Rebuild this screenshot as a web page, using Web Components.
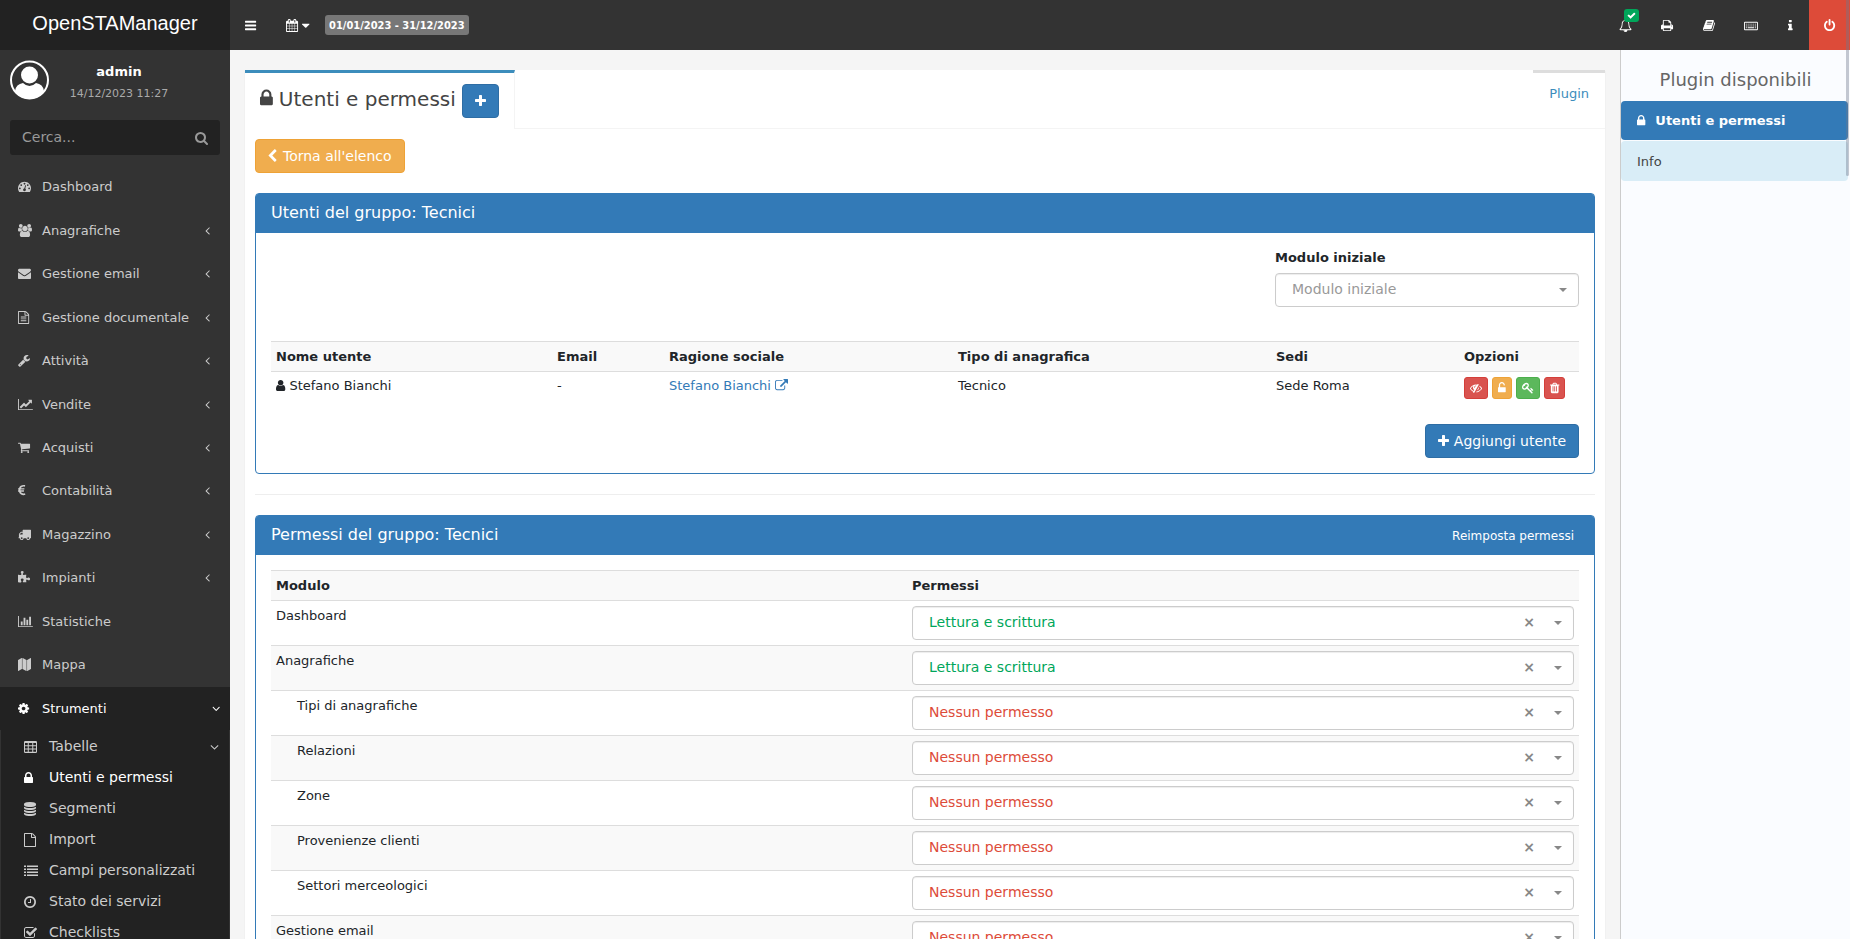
<!DOCTYPE html>
<html lang="it">
<head>
<meta charset="utf-8">
<title>Utenti e permessi - OpenSTAManager</title>
<style>
html,body{height:100%}
body{margin:0;font:13px/19px "DejaVu Sans",sans-serif;color:#212529;background:#f5f5f5;overflow:hidden}
</style>
</head>
<body>
<osm-app></osm-app>
<script>
// Icon table: name -> [viewBox x, advance width, path]; every glyph is 1792 units tall.
const R=(x,y,w,h)=>`M${x} ${y}h${w}v${h}h${-w}z`;
const FILE='M1596 380q28 28 48 76t20 88v1152q0 40-28 68t-68 28h-1344q-40 0-68-28t-28-68v-1600q0-40 28-68t68-28h896q40 0 88 20t76 48zm-444-244v376h376q-10-29-22-41l-313-313q-12-12-41-22zm384 1528v-1024h-416q-40 0-68-28t-28-68v-416h-768v1536h1280z';
const ICONS={
bars:[128,1536,'M1664 1344v128q0 26-19 45t-45 19h-1408q-26 0-45-19t-19-45v-128q0-26 19-45t45-19h1408q26 0 45 19t19 45zm0-512v128q0 26-19 45t-45 19h-1408q-26 0-45-19t-19-45v-128q0-26 19-45t45-19h1408q26 0 45 19t19 45zm0-512v128q0 26-19 45t-45 19h-1408q-26 0-45-19t-19-45v-128q0-26 19-45t45-19h1408q26 0 45 19t19 45z'],
plus:[192,1408,'M1600 736v192q0 40-28 68t-68 28h-416v416q0 40-28 68t-68 28h-192q-40 0-68-28t-28-68v-416h-416q-40 0-68-28t-28-68v-192q0-40 28-68t68-28h416v-416q0-40 28-68t68-28h192q40 0 68 28t28 68v416h416q40 0 68 28t28 68z'],
lock:[320,1152,'M640 768h512v-192q0-106-75-181t-181-75-181 75-75 181v192zm832 96v576q0 40-28 68t-68 28h-960q-40 0-68-28t-28-68v-576q0-40 28-68t68-28h32v-192q0-184 132-316t316-132 316 132 132 316v192h32q40 0 68 28t28 68z'],
unlock:[320,1152,'M1376 768q40 0 68 28t28 68v576q0 40-28 68t-68 28h-960q-40 0-68-28t-28-68v-576q0-40 28-68t68-28h32v-320q0-185 131.500-316.500t316.500-131.500 316.500 131.500 131.500 316.500q0 26-19 45t-45 19h-64q-26 0-45-19t-19-45q0-106-75-181t-181-75-181 75-75 181v320h736z'],
left:[346,1280,'M1427 301l-531 531 531 531q19 19 19 45t-19 45l-166 166q-19 19-45 19t-45-19l-742-742q-19-19-19-45t19-45l742-742q19-19 45-19t45 19l166 166q19 19 19 45t-19 45z'],
caret:[384,1024,'M1408 704q0 26-19 45l-448 448q-19 19-45 19t-45-19l-448-448q-19-19-19-45t19-45 45-19h896q26 0 45 19t19 45z'],
search:[64,1664,'M1216 832q0-185-131.500-316.500t-316.500-131.500-316.500 131.500-131.500 316.500 131.500 316.500 316.500 131.500 316.500-131.500 131.500-316.500zm512 832q0 52-38 90t-90 38q-54 0-90-38l-343-342q-179 124-399 124-143 0-273.500-55.500t-225-150-150-225-55.500-273.500 55.500-273.500 150-225 225-150 273.500-55.500 273.500 55.500 225 150 150 225 55.500 273.500q0 220-124 399l343 343q37 37 37 90z'],
dash:[0,1792,'M384 1152q0-53-37.500-90.500t-90.500-37.500-90.500 37.500-37.500 90.500 37.500 90.500 90.500 37.500 90.500-37.500 37.500-90.500zm192-448q0-53-37.500-90.500t-90.500-37.500-90.500 37.500-37.500 90.500 37.500 90.500 90.500 37.500 90.500-37.500 37.500-90.500zm428 481l101-382q6-26-7.500-48.500t-38.500-29.500-48 6.500-30 39.500l-101 382q-60 5-107 43.500t-63 98.500q-20 77 20 146t117 89 146-20 89-117q16-60-6-117t-72-91zm660-33q0-53-37.500-90.500t-90.500-37.500-90.500 37.500-37.500 90.500 37.500 90.500 90.500 37.500 90.500-37.500 37.500-90.500zm-640-640q0-53-37.500-90.500t-90.500-37.500-90.500 37.500-37.500 90.500 37.500 90.500 90.500 37.500 90.500-37.500 37.500-90.500zm448 192q0-53-37.500-90.500t-90.500-37.500-90.500 37.500-37.500 90.500 37.500 90.500 90.500 37.500 90.500-37.500 37.500-90.500zm320 448q0 261-141 483-19 29-54 29h-1402q-35 0-54-29-141-221-141-483 0-182 71-348t191-286 286-191 348-71 348 71 286 191 191 286 71 348z'],
users:[0,1920,'M593 896q-162 5-265 128h-134q-82 0-138-40.500t-56-118.500q0-353 124-353 6 0 43.500 21t97.500 42.500 119 21.500q67 0 133-23-5 37-5 66 0 159 93 292zm1071 637q0 120-73 189.500t-194 69.500h-874q-121 0-194-69.500t-73-189.500q0-53 3.500-103.500t14-109 26.500-108.500 43-97.500 62-81 85.500-53.500 111.500-20q10 0 43 21.500t73 48 107 48 135 21.500 135-21.500 107-48 73-48 43-21.500q61 0 111.500 20t85.500 53.500 62 81 43 97.500 26.500 108.500 14 109 3.500 103.500zm-1024-1277q0 106-75 181t-181 75-181-75-75-181 75-181 181-75 181 75 75 181zm704 384q0 159-112.500 271.500t-271.500 112.500-271.500-112.500-112.500-271.500 112.500-271.500 271.500-112.500 271.500 112.500 112.500 271.500zm576 225q0 78-56 118.500t-138 40.500h-134q-103-123-265-128 93-133 93-292 0-29-5-66 66 23 133 23 59 0 119-21.500t97.500-42.500 43.500-21q124 0 124 353zm-128-609q0 106-75 181t-181 75-181-75-75-181 75-181 181-75 181 75 75 181z'],
mail:[0,1792,'M1792 710v794q0 66-47 113t-113 47h-1472q-66 0-113-47t-47-113v-794q44 49 101 87 362 246 497 345 57 42 92.500 65.500t94.500 48 110 24.500h2q51 0 110-24.500t94.500-48 92.500-65.500q170-123 498-345 57-39 100-87zm0-294q0 79-49 151t-122 123q-376 261-468 325-10 7-42.500 31t-54 38.500-52 32.500-57.500 27-50 9h-2q-23 0-50-9t-57.500-27-52-32.500-54-38.500-42.500-31q-91-64-262-182.500t-205-142.500q-62-42-117-115.500t-55-136.500q0-78 41.500-130t118.500-52h1472q65 0 112.500 47t47.500 113z'],
doc:[128,1536,FILE+'m-1024-864q0-14 9-23t23-9h704q14 0 23 9t9 23v64q0 14-9 23t-23 9h-704q-14 0-23-9t-9-23v-64zm736 224q14 0 23 9t9 23v64q0 14-9 23t-23 9h-704q-14 0-23-9t-9-23v-64q0-14 9-23t23-9h704zm0 256q14 0 23 9t9 23v64q0 14-9 23t-23 9h-704q-14 0-23-9t-9-23v-64q0-14 9-23t23-9h704z'],
file:[128,1536,FILE],
wrench:[64,1664,'M448 1472q0-26-19-45t-45-19-45 19-19 45 19 45 45 19 45-19 19-45zm644-420l-682 682q-37 37-90 37-52 0-91-37l-106-108q-38-36-38-90 0-53 38-91l681-681q39 98 114.500 173.500t173.500 114.500zm634-435q0 39-23 106-47 134-164.500 217.500t-258.500 83.500q-185 0-316.500-131.500t-131.500-316.500 131.500-316.500 316.500-131.500q58 0 121.500 16.500t107.500 46.500q16 11 16 28t-16 28l-293 169v224l193 107q5-3 79-48.500t135.500-81 70.500-35.500q15 0 23.500 10t8.500 25z'],
line:[0,2048,'M2048 1536v128h-2048v-1536h128v1408h1920zm-128-1248v435q0 21-19.500 29.500t-35.500-7.500l-121-121-633 633q-10 10-23 10t-23-10l-233-233-416 416-192-192 585-585q10-10 23-10t23 10l233 233 464-464-121-121q-16-16-7.500-35.500t29.500-19.500h435q14 0 23 9t9 23z'],
cart:[64,1664,'M704 1536q0 52-38 90t-90 38-90-38-38-90 38-90 90-38 90 38 38 90zm896 0q0 52-38 90t-90 38-90-38-38-90 38-90 90-38 90 38 38 90zm128-1088v512q0 24-16.500 42.500t-40.500 21.500l-1044 122q13 60 13 70 0 16-24 64h920q26 0 45 19t19 45-19 45-45 19h-1024q-26 0-45-19t-19-45q0-11 8-31.500t16-36 21.500-40 15.500-29.500l-177-823h-204q-26 0-45-19t-19-45 19-45 45-19h256q16 0 28.500 6.500t19.500 15.500 13 24.500 8 26 5.500 29.500 4.500 26h1201q26 0 45 19t19 45z'],
euro:[384,1024,'M1360 1307l35 159q3 12-3 22.500t-17 14.500l-5 1q-4 2-10.500 3.500t-16 4.500-21.500 5.500-25.500 5-30 5-33.500 4.500-36.500 3-38.500 1q-234 0-409-130.500t-238-351.500h-95q-13 0-22.500-9.500t-9.500-22.500v-113q0-13 9.500-22.500t22.500-9.500h66q-2-57 1-105h-67q-14 0-23-9t-9-23v-114q0-14 9-23t23-9h98q67-210 243.500-338t400.500-128q102 0 194 23 11 3 20 15 6 11 3 24l-43 159q-3 13-14 19.500t-24 2.500l-4-1q-4-1-11.500-2.500l-17.500-3.500-22.500-3.500-26-3-29-2.500-29.500-1q-126 0-226 64t-150 176h468q16 0 25 12 10 12 7 26l-24 114q-5 26-32 26h-488q-3 37 0 105h459q15 0 25 12 9 12 6 27l-24 112q-2 11-11 18.500t-20 7.500h-387q48 117 149.500 185.500t228.500 68.500q18 0 36-1.500t33.500-3.500 29.500-4.500 24.500-5 18.500-4.500l12-3 5-2q13-5 26 2 12 7 15 21z'],
truck:[0,1792,'M640 1408q0-52-38-90t-90-38-90 38-38 90 38 90 90 38 90-38 38-90zm-384-512h384v-256h-158q-13 0-22 9l-195 195q-9 9-9 22v30zm1280 512q0-52-38-90t-90-38-90 38-38 90 38 90 90 38 90-38 38-90zm256-1088v1024q0 15-4 26.500t-13.500 18.500-16.500 11.500-23.500 6-22.500 2-25.500 0-22.500-.5q0 106-75 181t-181 75-181-75-75-181h-384q0 106-75 181t-181 75-181-75-75-181h-64q-3 0-22.500.5t-25.500 0-22.500-2-23.500-6-16.500-11.500-13.500-18.500-4-26.500q0-26 19-45t45-19v-320q0-8-.5-35t0-38 2.500-34.500 6.500-37 14-30.500 22.500-30l198-198q19-19 50.500-32t58.500-13h160v-192q0-26 19-45t45-19h1024q26 0 45 19t19 45z'],
puzzle:[64,1664,'M1728 1098q0 81-44.500 135t-123.500 54q-41 0-77.500-17.500t-59-38-56.500-38-71-17.500q-110 0-110 124 0 39 16 115t15 115v5q-22 0-33 1-34 3-97.500 11.500t-115.500 13.500-98 5q-61 0-103-26.500t-42-83.500q0-37 17.500-71t38-56.500 38-59 17.500-77.500q0-79-54-123.500t-135-44.500q-84 0-143 45.500t-59 127.500q0 43 15 83t33.500 64.500 33.500 53 15 50.500q0 45-46 89-37 35-117 35-95 0-245-24-9-2-27.500-4t-27.500-4l-13-2q-1 0-3-1-2 0-2-1v-1024q2 1 17.500 3.500t34 5 21.500 3.500q150 24 245 24 80 0 117-35 46-44 46-89 0-22-15-50.500t-33.500-53-33.500-64.500-15-83q0-82 59-127.500t144-45.500q80 0 134 44.500t54 123.500q0 41-17.500 77.500t-38 59-38 56.500-17.500 71q0 57 42 83.500t103 26.500q64 0 180-15t163-17v2q-1 2-3.500 17.500t-5 34-3.500 21.500q-24 150-24 245 0 80 35 117 44 46 89 46 22 0 50.500-15t53-33.500 64.500-33.500 83-15q82 0 127.500 59t45.500 143z'],
chart:[0,2048,R(0,128,128,1536)+R(128,1536,1920,128)+R(384,896,256,512)+R(768,384,256,1024)+R(1152,640,256,768)+R(1536,256,256,1152)],
map:[0,1792,'M512 0q13 0 22.500 9.500t9.500 22.500v1472q0 20-17 28l-480 256q-7 4-15 4-13 0-22.500-9.500t-9.500-22.500v-1472q0-20 17-28l480-256q7-4 15-4zm1248 0q13 0 22.500 9.500t9.500 22.500v1472q0 20-17 28l-480 256q-7 4-15 4-13 0-22.500-9.500t-9.500-22.500v-1472q0-20 17-28l480-256q7-4 15-4zm-1120 0q8 0 14 3l512 256q18 10 18 29v1472q0 13-9.500 22.500t-22.500 9.500q-8 0-14-3l-512-256q-18-10-18-29v-1472q0-13 9.500-22.500t22.500-9.500z'],
cog:[128,1536,'M1152 896q0-106-75-181t-181-75-181 75-75 181 75 181 181 75 181-75 75-181zm512-109v222q0 12-8 23t-20 13l-185 28q-19 54-39 91 35 50 107 138 10 12 10 25t-9 23q-27 37-99 108t-94 71q-12 0-26-9l-138-108q-44 23-91 38-16 136-29 186-7 28-36 28h-222q-14 0-24.500-8.500t-11.500-21.500l-28-184q-49-16-90-37l-141 107q-10 9-25 9-14 0-25-11-126-114-165-168-7-10-7-23 0-12 8-23 15-21 51-66.500t54-70.500q-27-50-41-99l-183-27q-13-2-21-12.500t-8-23.500v-222q0-12 8-23t19-13l186-28q14-46 39-92-40-57-107-138-10-12-10-24 0-10 9-23 26-36 98.500-107.500t94.500-71.500q13 0 26 10l138 107q44-23 91-38 16-136 29-186 7-28 36-28h222q14 0 24.500 8.500t11.500 21.500l28 184q49 16 90 37l142-107q9-9 24-9 13 0 25 10 129 119 165 170 7 8 7 22 0 12-8 23-15 21-51 66.500t-54 70.500q26 50 41 98l183 28q13 2 21 12.500t8 23.500z'],
table:[64,1664,'M224 128h1344q160 0 160 160v1216q0 160-160 160h-1344q-160 0-160-160v-1216q0-160 160-160z'+[[192,352],[672,448],[1248,352]].map(([x,w])=>[384,800,1216].map(y=>R(x,y,w,288)).join('')).join('')],
db:[128,1536,'M896 768q237 0 443-43t325-127v170q0 69-103 128t-280 93.500-385 34.500-385-34.500-280-93.500-103-128v-170q119 84 325 127t443 43zm0 768q237 0 443-43t325-127v170q0 69-103 128t-280 93.500-385 34.500-385-34.500-280-93.500-103-128v-170q119 84 325 127t443 43zm0-384q237 0 443-43t325-127v170q0 69-103 128t-280 93.500-385 34.500-385-34.500-280-93.500-103-128v-170q119 84 325 127t443 43zm0-1152q208 0 385 34.500t280 93.500 103 128v128q0 69-103 128t-280 93.500-385 34.500-385-34.500-280-93.500-103-128v-128q0-69 103-128t280-93.500 385-34.500z'],
list:[0,1792,[128,512,896,1280].map(y=>R(0,y+64,256,192)+R(384,y+64,1408,192)).join('')],
clock:[128,1536,'M1024 544v448q0 14-9 23t-23 9h-320q-14 0-23-9t-9-23v-64q0-14 9-23t23-9h224v-352q0-14 9-23t23-9h64q14 0 23 9t9 23zm416 352q0-148-73-273t-198-198-273-73-273 73-198 198-73 273 73 273 198 198 273 73 273-73 198-198 73-273zm224 0q0 209-103 385.500t-279.500 279.500-385.500 103-385.500-103-279.500-279.500-103-385.500 103-385.500 279.500-279.500 385.500-103 385.500 103 279.500 279.500 103 385.500z'],
checkbox:[64,1664,'M1472 930v318q0 119-84.500 203.500t-203.500 84.500h-832q-119 0-203.500-84.500t-84.500-203.500v-832q0-119 84.500-203.500t203.500-84.500h832q63 0 117 25 15 7 18 23 3 17-9 29l-49 49q-10 10-23 10-3 0-9-2-23-6-45-6h-832q-66 0-113 47t-47 113v832q0 66 47 113t113 47h832q66 0 113-47t47-113v-254q0-13 9-22l64-64q10-10 23-10 6 0 12 3 20 8 20 29zm231-489l-814 814q-24 24-57 24t-57-24l-430-430q-24-24-24-57t24-57l110-110q24-24 57-24t57 24l263 263 647-647q24-24 57-24t57 24l110 110q24 24 24 57t-24 57z'],
aleft:[544,704,'M1203 544q0 13-10 23l-393 393 393 393q10 10 10 23t-10 23l-50 50q-10 10-23 10t-23-10l-466-466q-10-10-10-23t10-23l466-466q10-10 23-10t23 10l50 50q10 10 10 23z'],
adown:[320,1152,'M1395 736q0 13-10 23l-466 466q-10 10-23 10t-23-10l-466-466q-10-10-10-23t10-23l50-50q10-10 23-10t23 10l393 393 393-393q10-10 23-10t23 10l50 50q10 10 10 23z'],
user:[256,1280,'M1536 1399q0 109-62.500 187t-150.500 78h-854q-88 0-150.500-78t-62.500-187q0-85 8.500-160.500t31.500-152 58.500-131 94-89 134.500-34.500q131 128 313 128t313-128q76 0 134.500 34.500t94 89 58.500 131 31.500 152 8.500 160.500zm-256-887q0 159-112.500 271.500t-271.500 112.500-271.500-112.500-112.500-271.500 112.500-271.500 271.500-112.500 271.500 112.500 112.500 271.500z'],
ext:[0,1792,'M1408 928v320q0 119-84.500 203.500t-203.500 84.500h-832q-119 0-203.500-84.500t-84.500-203.500v-832q0-119 84.500-203.500t203.500-84.500h704q14 0 23 9t9 23v64q0 14-9 23t-23 9h-704q-66 0-113 47t-47 113v832q0 66 47 113t113 47h832q66 0 113-47t47-113v-320q0-14 9-23t23-9h64q14 0 23 9t9 23zm384-864v512q0 26-19 45t-45 19-45-19l-176-176-652 652q-10 10-23 10t-23-10l-114-114q-10-10-10-23t10-23l652-652-176-176q-19-19-19-45t19-45 45-19h512q26 0 45 19t19 45z'],
eye:[0,1792,'M555 1335l78-141q-87-63-136-159t-49-203q0-121 61-225-229 117-381 353 167 258 427 375zm389-759q0-20-14-34t-34-14q-125 0-214.500 89.500t-89.500 214.500q0 20 14 34t34 14 34-14 14-34q0-86 61-147t147-61q20 0 34-14t14-34zm363-191q0 7-1 9-106 189-316 567t-315 566l-49 89q-10 16-28 16-12 0-134-70-16-10-16-28 0-12 44-87-143-65-263.500-173t-208.500-245q-20-31-20-69t20-69q153-235 380-371t496-136q89 0 180 17l54-97q10-16 28-16 5 0 18 6t31 15.500 33 18.500 31.500 18.500 19.500 11.500q16 10 16 27zm37 447q0 139-79 253.500t-209 164.500l280-502q8 45 8 84zm448 128q0 35-20 69-39 64-109 145-150 172-347.500 267t-419.500 95l74-132q212-18 392.500-137t301.500-307q-115-179-282-294l63-112q95 64 182.500 153t144.500 184q20 34 20 69z'],
key:[0,1792,'M832 512q0-80-56-136t-136-56-136 56-56 136q0 42 19 83-41-19-83-19-80 0-136 56t-56 136 56 136 136 56 136-56 56-136q0-42-19-83 41 19 83 19 80 0 136-56t56-136zm851 704q0 17-49 66t-66 49q-9 0-28.500-16t-36.500-33-38.500-40-24.500-26l-96 96 220 220q28 28 28 68 0 42-39 81t-81 39q-40 0-68-28l-671-671q-176 131-365 131-163 0-265.500-102.500t-102.500-265.500q0-160 95-313t248-248 313-95q163 0 265.500 102.500t102.500 265.500q0 189-131 365l355 355 96-96q-3-3-26-24.500t-40-38.500-33-36.500-16-28.500q0-17 49-66t66-49q13 0 23 10 6 6 46 44.500t82 79.500 86.500 86 73 78 28.500 41z'],
trash:[192,1408,'M704 1376v-704q0-14-9-23t-23-9h-64q-14 0-23 9t-9 23v704q0 14 9 23t23 9h64q14 0 23-9t9-23zm256 0v-704q0-14-9-23t-23-9h-64q-14 0-23 9t-9 23v704q0 14 9 23t23 9h64q14 0 23-9t9-23zm256 0v-704q0-14-9-23t-23-9h-64q-14 0-23 9t-9 23v704q0 14 9 23t23 9h64q14 0 23-9t9-23zm-544-992h448l-48-117q-7-9-17-11h-317q-10 2-17 11zm928 32v64q0 14-9 23t-23 9h-96v948q0 83-47 143.500t-113 60.500h-832q-66 0-113-58.500t-47-141.500v-952h-96q-14 0-23-9t-9-23v-64q0-14 9-23t23-9h309l70-167q15-37 54-63t79-26h320q40 0 79 26t54 63l70 167h309q14 0 23 9t9 23z'],
cal:[64,1664,'M192 1664h288v-288h-288v288zm352 0h320v-288h-320v288zm-352-352h288v-320h-288v320zm352 0h320v-320h-320v320zm-352-384h288v-288h-288v288zm736 736h320v-288h-320v288zm-384-736h320v-288h-320v288zm768 736h288v-288h-288v288zm-384-352h320v-320h-320v320zm-352-864v-288q0-13-9.500-22.500t-22.500-9.500h-64q-13 0-22.500 9.500t-9.500 22.500v288q0 13 9.500 22.500t22.500 9.500h64q13 0 22.500-9.500t9.500-22.500zm736 864h288v-320h-288v320zm-384-384h320v-288h-320v288zm384 0h288v-288h-288v288zm32-480v-288q0-13-9.500-22.500t-22.500-9.500h-64q-13 0-22.500 9.500t-9.500 22.500v288q0 13 9.500 22.500t22.500 9.500h64q13 0 22.500-9.500t9.500-22.500zm384-64v1280q0 52-38 90t-90 38h-1408q-52 0-90-38t-38-90v-1280q0-52 38-90t90-38h128v-96q0-66 47-113t113-47h64q66 0 113 47t47 113v96h384v-96q0-66 47-113t113-47h64q66 0 113 47t47 113v96h128q52 0 90 38t38 90z'],
bell:[0,1792,'M912 1696q0-16-16-16-59 0-101.500-42.500t-42.500-101.500q0-16-16-16t-16 16q0 73 51.500 124.500t124.500 51.500q16 0 16-16zm-666-288h1300q-266-300-266-832 0-51-24-105t-69-103-121.500-80.500-169.500-31.500-169.500 31.500-121.500 80.500-69 103-24 105q0 532-266 832zm1482 0q0 52-38 90t-90 38h-448q0 106-75 181t-181 75-181-75-75-181h-448q-52 0-90-38t-38-90q50-42 91-88t85-119.500 74.500-158.500 50-206 19.500-260q0-152 117-282.500t307-158.500q-8-19-8-39 0-40 28-68t68-28 68 28 28 68q0 20-8 39 190 28 307 158.500t117 282.500q0 139 19.500 260t50 206 74.500 158.500 85 119.500 91 88z'],
check:[0,1792,'M1671 566q0 40-28 68l-724 724-136 136q-28 28-68 28t-68-28l-136-136-362-362q-28-28-28-68t28-68l136-136q28-28 68-28t68 28l294 295 656-657q28-28 68-28t68 28l136 136q28 28 28 68z'],
print:[64,1664,'M448 1536h896v-256h-896v256zm0-640h896v-384h-160q-40 0-68-28t-28-68v-160h-640v640zm1152 64q0-26-19-45t-45-19-45 19-19 45 19 45 45 19 45-19 19-45zm128 0v416q0 13-9.500 22.500t-22.500 9.500h-224v160q0 40-28 68t-68 28h-960q-40 0-68-28t-28-68v-160h-224q-13 0-22.500-9.500t-9.500-22.500v-416q0-79 56.500-135.500t135.500-56.500h64v-544q0-40 28-68t68-28h672q40 0 88 20t76 48l152 152q28 28 48 76t20 88v256h64q79 0 135.500 56.500t56.500 135.500z'],
book:[64,1664,'M1703 478q40 57 18 129l-275 906q-19 64-76.500 107.500t-122.500 43.500h-923q-77 0-148.500-53.500t-99.500-131.500q-24-67-2-127 0-4 3-27t4-37q1-8-3-21.500t-3-19.500q2-11 8-21t16.500-23.500 16.500-23.500q23-38 45-91.500t30-91.500q3-10 .5-30t-.5-28q3-11 17-28t17-23q21-36 42-92t25-90q1-9-2.500-32t.5-28q4-13 22-30.500t22-22.500q19-26 42.500-84.500t27.500-96.500q1-8-3-25.500t-2-26.500q2-8 9-18t18-23 17-21q8-12 16.500-30.500t15-35 16-36 19.500-32 26.500-23.500 36-11.500 47.500 5.500l-1 3q38-9 51-9h761q74 0 114 56t18 130l-274 906q-36 119-71.500 153.500t-128.500 34.500h-869q-27 0-38 15-11 16-1 43 24 70 144 70h923q29 0 56-15.500t35-41.500l300-987q7-22 5-57 38 15 59 43zm-1064 2q-4 13 2 22.500t20 9.500h608q13 0 25.500-9.500t16.500-22.500l21-64q4-13-2-22.500t-20-9.500h-608q-13 0-25.500 9.500t-16.500 22.500zm-83 256q-4 13 2 22.500t20 9.500h608q13 0 25.500-9.500t16.500-22.500l21-64q4-13-2-22.500t-20-9.500h-608q-13 0-25.500 9.500t-16.500 22.500z'],
keyboard:[0,1920,'M128 384h1664q128 0 128 128v896q0 128-128 128h-1664q-128 0-128-128v-896q0-128 128-128zM128 512v896h1664v-896z'+[256,512,768,1024,1280,1536].map(x=>R(x,640,128,128)+R(x,896,128,128)).join('')+R(256,1152,128,128)+R(512,1152,896,128)+R(1536,1152,128,128)],
info:[576,640,'M1216 1344v128q0 26-19 45t-45 19h-512q-26 0-45-19t-19-45v-128q0-26 19-45t45-19h64v-384h-64q-26 0-45-19t-19-45v-128q0-26 19-45t45-19h384q26 0 45 19t19 45v576h64q26 0 45 19t19 45zm-128-1152v192q0 26-19 45t-45 19h-256q-26 0-45-19t-19-45v-192q0-26 19-45t45-19h256q26 0 45 19t19 45z'],
power:[128,1536,'M1664 896q0 156-61 298t-164 245-245 164-298 61-298-61-245-164-164-245-61-298q0-182 80.500-343t226.500-270q43-32 95.500-25t83.500 50q32 42 24.500 94.500t-49.500 84.500q-98 74-151.500 181t-53.500 228q0 104 40.500 198.500t109.500 163.500 163.500 109.500 198.500 40.500 198.500-40.500 163.500-109.500 109.500-163.500 40.500-198.500q0-121-53.500-228t-151.500-181q-42-32-49.500-84.500t24.500-94.500q31-43 84-50t95 25q146 109 226.500 270t80.500 343zm-640-768v640q0 52-38 90t-90 38-90-38-38-90v-640q0-52 38-90t90-38 90 38 38 90z']
};
const define=(name,html,setup)=>customElements.define(name,class extends HTMLElement{
  constructor(){
    super();
    const t=document.createElement('template');
    t.innerHTML=typeof html==='function'?html(this):html;
    this.attachShadow({mode:'open'}).append(t.content.cloneNode(true));
    if(setup)setup(this);
  }
});
const RESET='<style>*{box-sizing:border-box}a{color:inherit;text-decoration:none}ul{list-style:none;margin:0;padding:0}button,input,select{font:inherit;margin:0}</style>';

customElements.define('osm-icon',class extends HTMLElement{
  connectedCallback(){
    if(this.shadowRoot)return;
    const [x,w,d]=ICONS[this.getAttribute('name')];
    this.attachShadow({mode:'open'}).innerHTML=`<style>:host{display:inline-block;line-height:1;height:1em;vertical-align:-2px}svg{display:block;height:1em;fill:currentColor;overflow:visible}</style><svg viewBox="${x} 0 ${w} 1792" aria-hidden="true"><path fill-rule="${this.getAttribute('name')==='map'?'nonzero':'evenodd'}" d="${d}"/></svg>`;
  }
});

const ic=n=>`<osm-icon name="${n}"></osm-icon>`;

define('osm-topbar',RESET+`<style>
:host{display:flex;height:50px;background:#333;color:#fff}
.brand{flex:0 0 230px;background:#222;text-align:center;font:20px/46px "Liberation Sans",Arial,sans-serif;color:#fff}
button{background:none;border:0;color:inherit;padding:0;height:50px;display:flex;align-items:center;justify-content:center;gap:4px;position:relative}
.left{display:flex;align-items:center;flex:1}
.menu{width:41px}.cal{width:54px}
.range{background:#777;border-radius:3px;height:20px;padding:0 4px;font-weight:bold;line-height:21px;font-family:"DejaVu Sans Condensed","DejaVu Sans",sans-serif;font-size:11px}
.right{display:flex;padding-top:1px}
.right button{width:42px;height:49px}
.right .info{width:37px}
.right .power{width:41px;background:#dd4b39;height:50px;margin-top:-1px}
.ok{position:absolute;left:20px;top:8px;width:15px;height:13px;border-radius:3px;background:#00a65a;font-size:9px;display:flex;align-items:center;justify-content:center}
</style>
<a class="brand" href="#">OpenSTAManager</a>
<div class="left"><button class="menu" aria-label="Menu">${ic('bars')}</button><button class="cal" aria-label="Periodo">${ic('cal')}${ic('caret')}</button><a href="#" class="range">01/01/2023 - 31/12/2023</a></div>
<div class="right"><button aria-label="Notifiche">${ic('bell')}<span class="ok">${ic('check')}</span></button><button aria-label="Stampa">${ic('print')}</button><button aria-label="Manuale">${ic('book')}</button><button aria-label="Scorciatoie">${ic('keyboard')}</button><button class="info" aria-label="Informazioni">${ic('info')}</button><button class="power" aria-label="Esci">${ic('power')}</button></div>`);

define('osm-nav-item',RESET+`<style>
:host{display:block}
a{display:flex;align-items:center;height:100%;padding:0 20px 0 18px;color:#ccc}
.i{flex:0 0 24px;display:flex}
.t{flex:1}
:host([open]) a{background:#222;color:#fff;padding-right:10px}
:host([sub]) a{padding:0 10px 0 23px;height:31px;font-size:14px;background:none;color:#ccc}
:host([sub]) .i{flex-basis:25px}
:host([sub][active]) a{color:#fff}
</style><a href="#"><span class="i"><slot name="icon"></slot></span><span class="t"><slot></slot></span><slot name="arrow"></slot></a>`);

const item=(n,t,arrow='',attr='')=>`<osm-nav-item ${attr}><osm-icon slot="icon" name="${n}"></osm-icon>${t}${arrow?`<osm-icon slot="arrow" name="${arrow}"></osm-icon>`:''}</osm-nav-item>`;
define('osm-sidebar',RESET+`<style>
:host{display:block;background:#333;color:#ccc;overflow:hidden}
.user{display:flex;height:70px;padding:10px}
.user>svg{width:39px;height:40px;flex:none}
.user div{flex:0 0 140px;text-align:center;color:#aaa;font-size:11px;line-height:20px;padding-top:1px}
.user b{display:block;color:#fff;font-size:13px;line-height:22px;margin-bottom:1px}
form{margin:0 10px;height:35px;background:#222;border-radius:3px;display:flex;align-items:center;padding-right:12px;color:#999;font-size:14px}
input{flex:1;min-width:0;background:none;border:0;padding:0 12px;font-size:14px;color:#ccc}
input::placeholder{color:#999;opacity:1}
form button{background:none;border:0;padding:0;color:#999;display:flex}
.main{display:grid;grid-template-rows:repeat(13,1fr);min-height:565px;margin-top:10px}
.sub{background:#222;margin:0 1px;padding-top:1px}
</style>
<div class="user"><svg viewBox="0 0 39 40"><circle cx="19.5" cy="20" r="18.500" fill="#333" stroke="#fff" stroke-width="2"/><circle cx="19.500" cy="15" r="8.500" fill="#fff"/><path fill="#fff" d="M5 31q1-7 8-8 3 3 6.500 3t6.500-3q7 1 8 8-5 8-14.500 8t-14.500-8z"/></svg><div><b>admin</b>14/12/2023 11:27</div></div>
<form><input type="text" placeholder="Cerca..." aria-label="Cerca"><button type="button" aria-label="Avvia ricerca">${ic('search')}</button></form>
<nav><div class="main">${[['dash','Dashboard'],['users','Anagrafiche',1],['mail','Gestione email',1],['doc','Gestione documentale',1],['wrench','Attività',1],['line','Vendite',1],['cart','Acquisti',1],['euro','Contabilità',1],['truck','Magazzino',1],['puzzle','Impianti',1],['chart','Statistiche'],['map','Mappa']].map(([n,t,a])=>item(n,t,a?'aleft':'')).join('')}${item('cog','Strumenti','adown','open')}</div>
<div class="sub">${item('table','Tabelle','adown','sub')}${item('lock','Utenti e permessi','','sub active')}${item('db','Segmenti','','sub')}${item('file','Import','','sub')}${item('list','Campi personalizzati','','sub')}${item('clock','Stato dei servizi','','sub')}${item('checkbox','Checklists','','sub')}</div></nav>`);

define('osm-button',RESET+`<style>
:host{display:inline-block}
button{display:flex;align-items:center;justify-content:center;gap:5px;height:34px;padding:0 12px 1px;border:1px solid #2e6da4;border-radius:4px;background:#337ab7;color:#fff;font-size:14px;line-height:20px}
:host([kind=warning]) button{background:#f0ad4e;border-color:#eea236}
:host([kind=danger]) button{background:#d9534f;border-color:#d43f3a}
:host([kind=success]) button{background:#5cb85c;border-color:#4cae4c}
:host([small]) button{height:22px;padding:0 5px;border-radius:3px;font-size:12px}
</style><button><slot></slot></button>`,el=>{if(el.title)el.shadowRoot.querySelector('button').setAttribute('aria-label',el.title)});

define('osm-select',el=>RESET+`<style>
:host{display:block;font-size:14px}
label{display:block;font-weight:bold;font-size:13px;margin-bottom:6px}
.box{position:relative}
select{display:block;appearance:none;width:100%;height:34px;border:1px solid #ccc;border-radius:4px;background:#fff;padding:0 60px 2px 16px;line-height:20px;color:#999;box-shadow:inset 0 1px 1px rgba(0,0,0,.075)}
select.rw{color:#00a65a}select.no{color:#dd4b39}
.x{position:absolute;right:38px;top:6px;width:14px;height:20px;padding:0;border:0;background:none;color:#888;font-weight:bold;line-height:20px}
.c{position:absolute;right:12px;top:15px;border:solid transparent;border-width:4px 4px 0;border-top-color:#888;pointer-events:none}
</style>${el.hasAttribute('label')?`<label for="s">${el.getAttribute('label')}</label>`:''}<div class="box"><select id="s" ${el.hasAttribute('label')?'':`aria-label="Permessi ${el.getAttribute('for-module')}"`} class="${el.getAttribute('tone')||''}"><option>${el.getAttribute('value')}</option></select>${el.hasAttribute('tone')?'<button class="x" aria-label="Rimuovi">×</button>':''}<span class="c"></span></div>`);

define('osm-panel',RESET+`<style>
:host{display:block;border:1px solid #337ab7;border-radius:4px;background:#fff}
header{display:flex;justify-content:space-between;align-items:center;height:39px;padding:0 20px 2px 15px;background:#337ab7;color:#fff;border-radius:2px 2px 0 0}
h2{margin:0;font-size:16px;font-weight:normal;line-height:20px}
.body{padding:15px}
</style><header><h2><slot name="title"></slot></h2><slot name="action"></slot></header><div class="body"><slot></slot></div>`);

const TABLE=`<style>
table{width:100%;table-layout:fixed;border-collapse:separate;border-spacing:0}
th,td{padding:5px;border-top:1px solid #ddd;text-align:left;vertical-align:top;line-height:19px;color:#212529}
th{background:#f9f9f9}
</style>`;
define('osm-users',RESET+TABLE+`<style>
:host{display:block}
td{line-height:18px}
.ops{display:flex;gap:4px}
td a{color:#337ab7}
</style><table><colgroup><col style="width:281px"><col style="width:112px"><col style="width:289px"><col style="width:318px"><col style="width:188px"><col style="width:120px"></colgroup>
<thead><tr><th>Nome utente</th><th>Email</th><th>Ragione sociale</th><th>Tipo di anagrafica</th><th>Sedi</th><th>Opzioni</th></tr></thead>
<tbody><tr><td>${ic('user')} Stefano Bianchi</td><td>-</td><td><a href="#">Stefano Bianchi ${ic('ext')}</a></td><td>Tecnico</td><td>Sede Roma</td><td><div class="ops"><osm-button small kind="danger" title="Disabilita">${ic('eye')}</osm-button><osm-button small kind="warning" title="Sblocca">${ic('unlock')}</osm-button><osm-button small kind="success" title="Token">${ic('key')}</osm-button><osm-button small kind="danger" title="Elimina">${ic('trash')}</osm-button></div></td></tr></tbody></table>`);

const PERMS=[['Dashboard',0,1],['Anagrafiche',0,1],['Tipi di anagrafiche',1],['Relazioni',1],['Zone',1],['Provenienze clienti',1],['Settori merceologici',1],['Gestione email',0]];
define('osm-permissions',RESET+TABLE+`<style>
:host{display:block}
tbody tr:nth-child(even){background:#f9f9f9}
.child{padding-left:26px}
</style><table><colgroup><col style="width:636px"><col style="width:672px"></colgroup><thead><tr><th>Modulo</th><th>Permessi</th></tr></thead><tbody>${PERMS.map(([n,c,rw])=>`<tr><td class="${c?'child':''}">${n}</td><td><osm-select for-module="${n}" tone="${rw?'rw':'no'}" value="${rw?'Lettura e scrittura':'Nessun permesso'}"></osm-select></td></tr>`).join('')}</tbody></table>`);

define('osm-content',RESET+`<style>
:host{display:block;padding:20px 15px 0;overflow:hidden}
.card{background:#fff;box-shadow:0 1px 1px rgba(0,0,0,.1)}
.tabs{display:flex;justify-content:space-between;height:59px;border-bottom:1px solid #f4f4f4}
.tab{display:flex;align-items:flex-start;height:59px;border-top:3px solid #3c8dbc;background:#fff;border-right:1px solid #f4f4f4;padding:11px 15px 0;color:#444}
h1{display:flex;align-items:flex-start;gap:6px;margin:0;font-size:20px;line-height:30px;font-weight:normal}
h1>osm-icon{margin-top:4px}
.plug{border-top:3px solid #ddd;padding:11px 16px 0;line-height:20px;color:#3c8dbc}
.pane{padding:10px}
osm-panel{margin-top:20px}
.initial{display:flex;justify-content:flex-end;padding-bottom:34px}
.initial osm-select{width:304px}
.add{display:flex;justify-content:flex-end;margin-top:20px}
hr{border:0;border-top:1px solid #eee;margin:20px 0 0}
.reset{font-size:12px;line-height:20px;padding-top:3px}
</style><div class="card"><div class="tabs"><div class="tab"><h1>${ic('lock')}Utenti e permessi <osm-button title="Aggiungi">${ic('plus')}</osm-button></h1></div><a class="plug" href="#">Plugin</a></div>
<div class="pane"><osm-button kind="warning">${ic('left')}Torna all'elenco</osm-button>
<osm-panel><span slot="title">Utenti del gruppo: Tecnici</span><div class="initial"><osm-select label="Modulo iniziale" value="Modulo iniziale"></osm-select></div><osm-users></osm-users><div class="add"><osm-button>${ic('plus')}Aggiungi utente</osm-button></div></osm-panel>
<hr>
<osm-panel><span slot="title">Permessi del gruppo: Tecnici</span><a slot="action" class="reset" href="#">Reimposta permessi</a><osm-permissions></osm-permissions></osm-panel></div></div>`);

define('osm-plugins',RESET+`<style>
:host{display:block;background:#fafcff;border-left:1px solid #ccc;position:relative}
h2{margin:0;padding:18px 0 9px;text-align:center;font-size:18px;line-height:24px;font-weight:normal;color:#666}
a{display:flex;align-items:center;gap:10px;height:40px;padding:0 16px;margin-right:2px;border-radius:4px}
a:first-of-type{background:#337ab7;color:#fff;font-weight:bold;height:39px;margin-bottom:1px}
a:last-of-type{background:#d9edf7;color:#444}
.bar{position:absolute;right:1px;top:-50px;width:3px;height:176px;background:rgba(110,120,140,.4);border-radius:0 0 2px 2px}
</style><h2>Plugin disponibili</h2><a href="#">${ic('lock')}Utenti e permessi</a><a href="#">Info</a><div class="bar"></div>`);

define('osm-app',`<style>
:host{display:grid;grid-template:50px minmax(0,1fr)/230px minmax(0,1fr) 230px;height:100vh}
osm-topbar{grid-column:1/-1}
</style><osm-topbar></osm-topbar><osm-sidebar></osm-sidebar><osm-content></osm-content><osm-plugins></osm-plugins>`);
</script>
</body>
</html>
